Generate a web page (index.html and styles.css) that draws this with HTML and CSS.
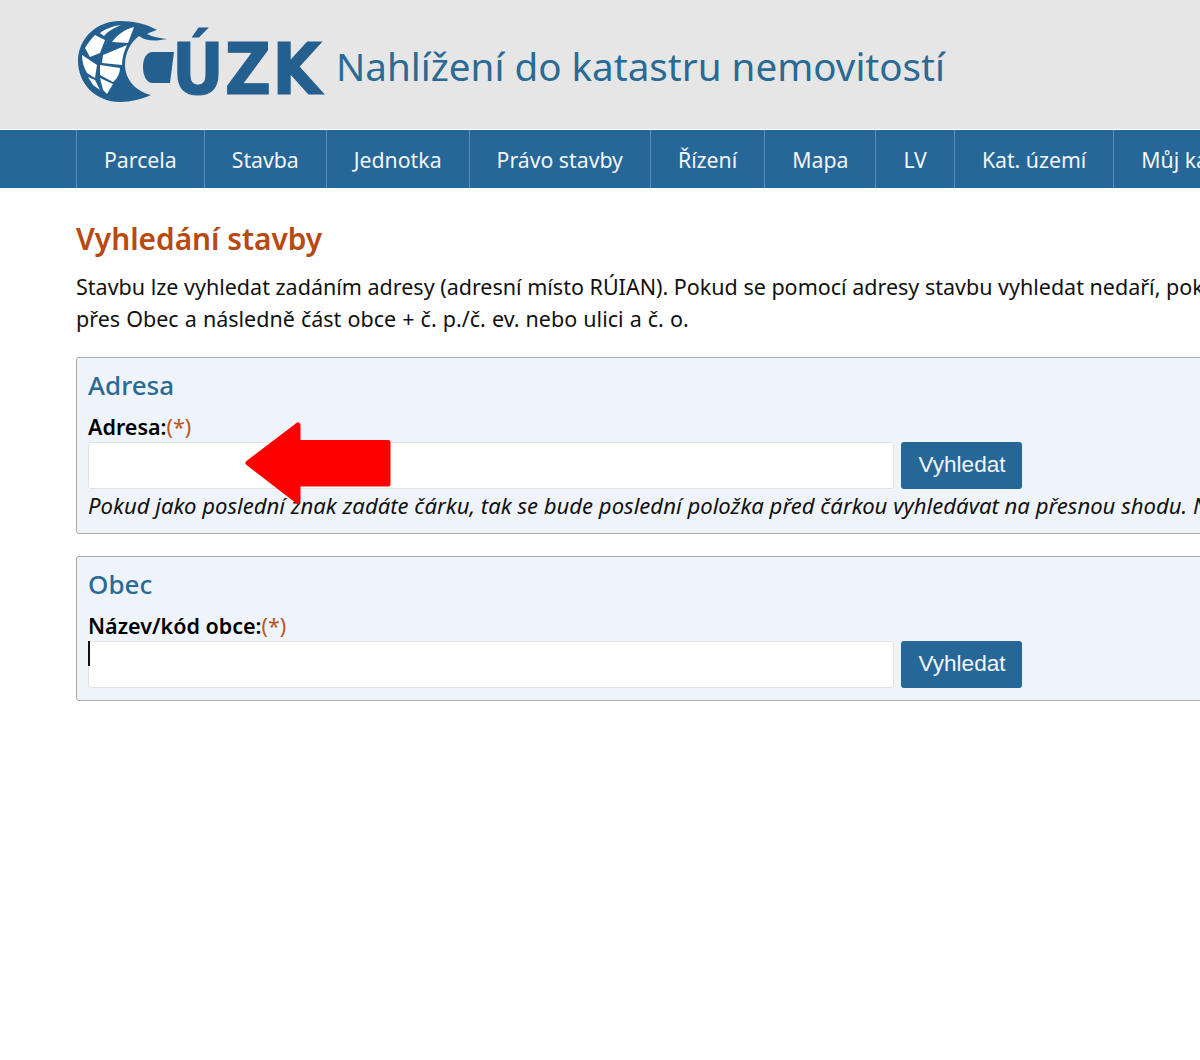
FILE: index.html
```html
<!DOCTYPE html>
<html lang="cs">
<head>
    <meta charset="UTF-8">
    <title>Nahlížení do katastru nemovitostí</title>
    <link rel="stylesheet" href="styles.css">
</head>
<body>
<div id="page">
    <div id="header">
        <a href="javascript:;" class="logo">
            <svg class="globe" width="100" height="92" viewBox="0 0 100 92">
                <path d="M82 15C72 9 58 6 45 6 21 6 3 24 3 46 3 69 21 87 45 87 56 87 67 84 76 80 60 76 50 64 50 50 50 38 55 28 64 21 72 27 82 26 92 24 84 23 78 22 72 19 75 17 79 16 82 15Z" fill="#235f8f"/>
                <g fill="#fff">
                    <path d="M25 18C30 14 38 11 46 10 39 13 33 16 29 21Z"/>
                    <path d="M37 27C42 20 50 14 59 12 57 17 55 23 53 28Z"/>
                    <path d="M10 33C13 28 16 24 20 20L30 25 25 38 15 42Z"/>
                    <path d="M28 40 52 30C49 36 47 43 47 50L27 48Z"/>
                    <path d="M7 40 13 44 22 50 20 63 12 58C9 53 7 47 7 40Z"/>
                    <path d="M25 50 45 53C45 57 43 63 38 67L25 60Z"/>
                    <path d="M25 63 38 69 32 79 28 75Z"/>
                    <path d="M13 62 20 65 25 75 18 70Z"/>
                </g>
                <path d="M78 37 99 37 95 68 78 68C71 68 68 60 68 52 68 44 71 37 78 37Z" fill="#235f8f"/>
            </svg>
            <span class="logo-text">ÚZK</span>
        </a>
        <span class="site-title">Nahlížení do katastru nemovitostí</span>
    </div>
    <div id="nav">
        <a href="javascript:;">Parcela</a>
        <a href="javascript:;">Stavba</a>
        <a href="javascript:;">Jednotka</a>
        <a href="javascript:;">Právo stavby</a>
        <a href="javascript:;">Řízení</a>
        <a href="javascript:;">Mapa</a>
        <a href="javascript:;">LV</a>
        <a href="javascript:;">Kat. území</a>
        <a href="javascript:;">Můj katastr</a>
    </div>
    <div id="content">
        <h1>Vyhledání stavby</h1>
        <p class="intro">Stavbu lze vyhledat zadáním adresy (adresní místo RÚIAN). Pokud se pomocí adresy stavbu vyhledat nedaří, pokračujte<br><span class="intro-end">přes Obec a následně část obce + č. p./č. ev. nebo ulici a č. o.</span></p>
        <div class="box">
            <h2>Adresa</h2>
            <label>Adresa:<span class="req">(*)</span></label>
            <div class="row">
                <input type="text">
                <button type="button">Vyhledat</button>
            </div>
            <p class="hint">Pokud jako poslední znak zadáte čárku, tak se bude poslední položka před čárkou vyhledávat na přesnou shodu. Např.</p>
        </div>
        <div class="box">
            <h2>Obec</h2>
            <label>Název/kód obce:<span class="req">(*)</span></label>
            <div class="row">
                <div class="field">
                    <input type="text">
                    <span class="caret"></span>
                </div>
                <button type="button">Vyhledat</button>
            </div>
        </div>
    </div>
    <svg class="arrow" width="147" height="84" viewBox="0 0 147 84">
        <path d="M53 3 L53 20.5 L143 20.5 L143 62 L53 62 L53 79.5 L3 41 Z" fill="#ff0000" stroke="#ff0000" stroke-width="5" stroke-linejoin="round"/>
    </svg>
</div>
</body>
</html>
```

FILE: styles.css
```css
*{margin: 0;padding: 0;box-sizing: border-box;}
html,body{height: 100%;background: #fff;overflow: hidden;}
body{font-family: "Noto Sans", "Open Sans", sans-serif;color: #111;}
a{text-decoration: none;}
#page{position: relative;width: 1500px;height: 1060px;}
#header{display: flex;align-items: flex-start;height: 129px;margin-bottom: 1px;padding: 15px 0 0 75px;background: #e6e6e6;}
.logo{display: flex;align-items: flex-start;width: 261px;height: 92px;}
.globe{flex: none;}
.logo-text{margin: 13px 0 0 -3px;font-family: "DejaVu Sans", sans-serif;font-weight: bold;font-stretch: condensed;font-size: 71px;letter-spacing: 1px;line-height: 84px;color: #235f8f;-webkit-text-stroke: 1px #235f8f;}
.site-title{margin-top: 25px;font-size: 38.6px;line-height: 52px;color: #2a6a94;}
#nav{display: flex;height: 58px;padding-left: 76px;background: #266797;}
#nav a{display: flex;align-items: center;padding: 0 27px;border-left: 1px solid #5d8fb5;font-size: 21.25px;color: #f2f6fa;white-space: nowrap;}
#content{padding: 27px 0 0 76px;}
h1{font-size: 29.8px;font-weight: 600;line-height: 48px;color: #b8490f;}
.intro{margin: 8px 0 22px;font-size: 21.5px;line-height: 32px;}
.intro-end{word-spacing: .5px;}
.box{margin-bottom: 22px;padding: 9px 11px 12px;background: #eff4fb;border: 1px solid #aaa;border-radius: 3px;}
h2{margin-bottom: 9px;font-size: 26px;font-weight: 500;line-height: 36px;color: #2a6a94;}
label{display: block;font-size: 21.5px;font-weight: 600;line-height: 30px;color: #000;}
.req{color: #b8561f;font-weight: 400;}
.row{display: flex;gap: 7px;}
.field{position: relative;}
input{display: block;width: 806px;height: 47px;background: #fff;border: 1px solid #e2e2e2;border-radius: 3px;}
.caret{position: absolute;left: 0;top: 0;width: 2px;height: 25px;background: #111;}
button{width: 121px;height: 47px;padding: 0 0 2px 1px;background: #266797;border: 0;border-radius: 3px;font-family: "Liberation Sans", Arial, sans-serif;font-size: 22.6px;color: #f2f6fa;}
.hint{font-size: 22.1px;font-style: italic;line-height: 32px;white-space: nowrap;}
.arrow{position: absolute;left: 245px;top: 422px;}
```
